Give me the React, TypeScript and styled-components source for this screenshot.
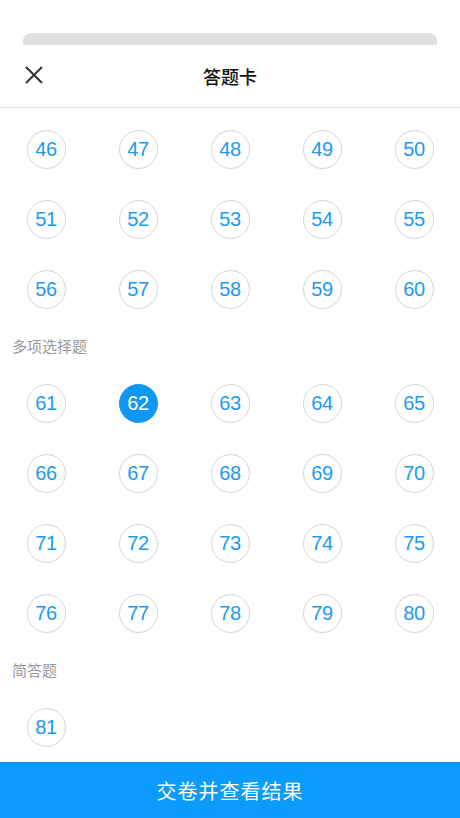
import { FC } from "react";
import styled, { createGlobalStyle } from "styled-components";

const GlobalStyle = createGlobalStyle`
  html, body {
    margin: 0;
    padding: 0;
    background: #fff;
    font-family: "Liberation Sans", "Noto Sans CJK SC", sans-serif;
  }
  * { box-sizing: border-box; }
`;

const StyledPage = styled.div`
  width: 460px;
  height: 818px;
  display: flex;
  flex-direction: column;
  overflow: hidden;
  background: #fff;
`;

const StyledPeek = styled.div`
  margin: 33px 23px 0;
  height: 12px;
  background: #e0e0e0;
  border-radius: 8px 8px 0 0;
`;

const StyledHeader = styled.div`
  position: relative;
  height: 63px;
  display: flex;
  align-items: center;
  justify-content: center;
  border-bottom: 1px solid #e3e3e3;
`;

const StyledClose = styled.button`
  position: absolute;
  left: 22px;
  top: 18px;
  width: 24px;
  height: 24px;
  padding: 0;
  border: none;
  background: none;
  display: flex;
  align-items: center;
  justify-content: center;
`;

const StyledTitle = styled.div`
  color: #111;
  font-size: 18px;
  font-weight: 500;
  font-family: "Noto Sans CJK SC", sans-serif;
`;

const StyledContent = styled.div`
  flex: 1;
  padding-top: 6px;
  overflow: hidden;
`;

const StyledSectionTitle = styled.div`
  height: 44px;
  line-height: 44px;
  padding-left: 12px;
  color: #999;
  font-size: 15px;
  font-family: "Noto Sans CJK SC", sans-serif;
`;

const StyledGrid = styled.div`
  display: grid;
  grid-template-columns: repeat(5, 92px);
  grid-auto-rows: 70px;
`;

const StyledCell = styled.div`
  display: flex;
  align-items: center;
  justify-content: center;
`;

const StyledBall = styled.div<{ $active?: boolean }>`
  width: 39px;
  height: 39px;
  border-radius: 50%;
  border: 1px solid ${(p) => (p.$active ? "#0f97f4" : "#d4d4d4")};
  background: ${(p) => (p.$active ? "#0f97f4" : "#fff")};
  color: ${(p) => (p.$active ? "#fff" : "#1b9bf0")};
  display: flex;
  align-items: center;
  justify-content: center;
  font-size: 20px;
  font-family: "Liberation Sans", sans-serif;
  letter-spacing: -0.3px;
`;

const StyledSubmit = styled.button`
  height: 56px;
  width: 100%;
  border: none;
  background: #0b9bfc;
  color: #fff;
  font-size: 20px;
  font-family: "Noto Sans CJK SC", sans-serif;
  letter-spacing: 1px;
`;

const range = (from: number, to: number) =>
  Array.from({ length: to - from + 1 }, (_, i) => from + i);

const Grid: FC<{ numbers: number[]; active?: number }> = (props) => (
  <StyledGrid>
    {props.numbers.map((n) => (
      <StyledCell key={n}>
        <StyledBall $active={n === props.active}>{n}</StyledBall>
      </StyledCell>
    ))}
  </StyledGrid>
);

const App: FC = () => {
  return (
    <StyledPage>
      <GlobalStyle />
      <StyledPeek />
      <StyledHeader>
        <StyledClose>
          <svg width="18" height="18" viewBox="0 0 18 18">
            <path d="M1 1L17 17M17 1L1 17" stroke="#333" strokeWidth="2" />
          </svg>
        </StyledClose>
        <StyledTitle>答题卡</StyledTitle>
      </StyledHeader>
      <StyledContent>
        <Grid numbers={range(46, 60)} />
        <StyledSectionTitle>多项选择题</StyledSectionTitle>
        <Grid numbers={range(61, 80)} active={62} />
        <StyledSectionTitle>简答题</StyledSectionTitle>
        <Grid numbers={[81]} />
      </StyledContent>
      <StyledSubmit>交卷并查看结果</StyledSubmit>
    </StyledPage>
  );
};

export default App;
